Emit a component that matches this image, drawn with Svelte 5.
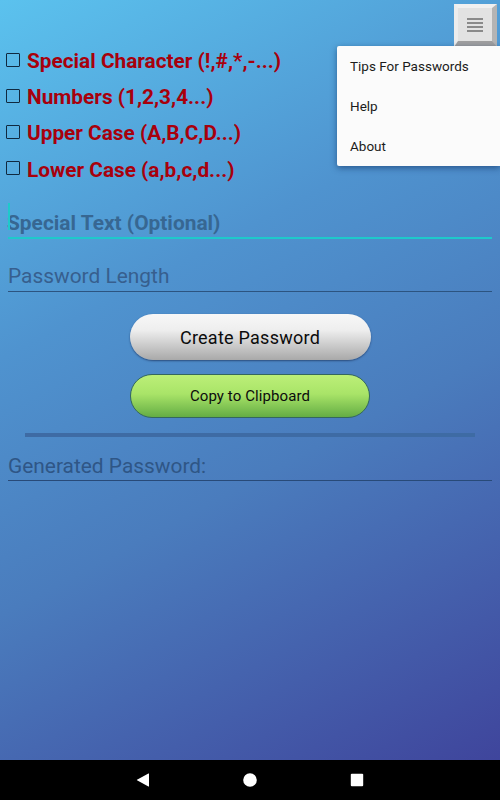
<script>
  const options = [
    'Special Character (!,#,*,-...)',
    'Numbers (1,2,3,4...)',
    'Upper Case (A,B,C,D...)',
    'Lower Case (a,b,c,d...)'
  ];
  const menu = ['Tips For Passwords', 'Help', 'About'];
</script>

<div class="screen">
  <main class="content">
    <header class="toolbar">
      <button class="overflow" aria-label="Menu">
        <span class="bars"><i></i><i></i><i></i><i></i></span>
      </button>
    </header>

    <section class="options">
      {#each options as option}
        <label class="option"><span class="box"></span><span>{option}</span></label>
      {/each}
    </section>

    <div class="field special"><span class="caret"></span>Special Text (Optional)</div>
    <div class="field length">Password Length</div>

    <div class="actions">
      <button class="btn create">Create Password</button>
      <button class="btn copy">Copy to Clipboard</button>
    </div>

    <div class="divider"></div>

    <div class="field generated">Generated Password:</div>

    <nav class="popup">
      {#each menu as item}
        <div class="popup-item">{item}</div>
      {/each}
    </nav>
  </main>

  <footer class="navbar">
    <svg width="14" height="14" viewBox="0 0 14 14"><path d="M13 .8v12.4a.4.4 0 0 1-.6.3L1 7.3a.4.4 0 0 1 0-.6L12.400.500a.4.4 0 0 1 .6.3z" fill="#fff"/></svg>
    <svg width="14" height="14" viewBox="0 0 14 14"><circle cx="7" cy="7" r="6.800" fill="#fff"/></svg>
    <svg width="14" height="14" viewBox="0 0 14 14"><rect x=".8" y=".8" width="12.400" height="12.400" rx="1" fill="#fff"/></svg>
  </footer>
</div>

<style>
  :global(body) {
    margin: 0;
    font-family: Roboto, sans-serif;
  }
  .screen {
    width: 500px;
    height: 800px;
    display: flex;
    flex-direction: column;
    overflow: hidden;
  }
  .content {
    position: relative;
    height: 760px;
    box-sizing: border-box;
    background: linear-gradient(152deg, #5bc2ee 0%, #4f93cf 35%, #4a7cbd 60%, #3f459c 100%);
  }
  .toolbar {
    height: 43px;
    display: flex;
    justify-content: flex-end;
    align-items: flex-start;
    padding: 4px 3px 0 0;
    box-sizing: border-box;
  }
  .overflow {
    width: 43px;
    height: 43px;
    padding: 0;
    box-sizing: border-box;
    background: #e2e2e2;
    border-style: solid;
    border-width: 4px 5px 6px 4px;
    border-color: #f0f0f0 #b4b4b4 #a0a0a0 #ececec;
    display: flex;
    align-items: center;
    justify-content: center;
  }
  .bars {
    display: flex;
    flex-direction: column;
    gap: 2px;
    width: 16px;
  }
  .bars i {
    display: block;
    height: 2px;
    background: #8a8a8a;
  }
  .options {
    display: flex;
    flex-direction: column;
    padding: 0 0 0 6px;
  }
  .option {
    height: 36.200px;
    display: flex;
    align-items: center;
    gap: 7px;
    font-size: 20.800px;
    font-weight: 700;
    color: #a8000c;
  }
  .box {
    width: 12px;
    height: 12px;
    border: 1.500px solid #10293f;
    border-radius: 1px;
    margin-top: -3px;
    flex: none;
  }
  .field {
    position: relative;
    margin: 0 8px;
    font-size: 20.900px;
    line-height: 24px;
    color: #37628f;
    border-bottom: 1px solid #2c5480;
  }
  .special {
    margin-top: 15.400px;
    height: 36px;
    padding-top: 8px;
    box-sizing: border-box;
    font-weight: 700;
    color: #376792;
    border-bottom: 2px solid #1ec9cb;
    text-indent: -1px;
  }
  .caret {
    position: absolute;
    left: 0;
    top: 0;
    width: 1.500px;
    height: 27px;
    background: #1ec9cb;
  }
  .length {
    margin-top: 17px;
    height: 36px;
    padding-top: 8px;
    box-sizing: border-box;
    color: #375f8e;
  }
  .actions {
    display: flex;
    flex-direction: column;
    align-items: center;
    gap: 14px;
    margin-top: 22px;
  }
  .btn {
    font-family: Roboto, sans-serif;
    color: #0c0c0c;
    border-radius: 24px;
    padding: 0;
  }
  .create {
    width: 241px;
    height: 46px;
    font-size: 18px;
    letter-spacing: 0.25px;
    border: none;
    background: linear-gradient(#f7f7f7 0%, #eeeeee 35%, #a9a9a9 100%);
    box-shadow: 0 1px 2px #2b4c7c;
  }
  .copy {
    width: 240px;
    height: 44px;
    font-size: 15px;
    letter-spacing: 0.1px;
    border: 1.500px solid #34675e;
    background: linear-gradient(#bcef78 0%, #a9e468 45%, #64ad44 100%);
  }
  .divider {
    height: 4px;
    margin: 15px 25px 0;
    background: #3e6ba4;
  }
  .generated {
    margin-top: 15px;
    height: 29px;
    padding-top: 2px;
    box-sizing: border-box;
    color: #2f5686;
    border-bottom: 1px solid #284a78;
  }
  .popup {
    position: absolute;
    top: 46px;
    right: 0;
    width: 163px;
    height: 120px;
    background: #fbfbfb;
    border-radius: 2px 0 0 2px;
    box-shadow: 0 2px 6px rgba(10, 40, 90, 0.55);
    display: flex;
    flex-direction: column;
  }
  .popup-item {
    height: 40px;
    line-height: 40px;
    padding-left: 13px;
    font-size: 13.500px;
    color: #1c1c1c;
  }
  .navbar {
    height: 40px;
    background: #000;
    display: flex;
    align-items: center;
    justify-content: center;
    gap: 93px;
  }
</style>
